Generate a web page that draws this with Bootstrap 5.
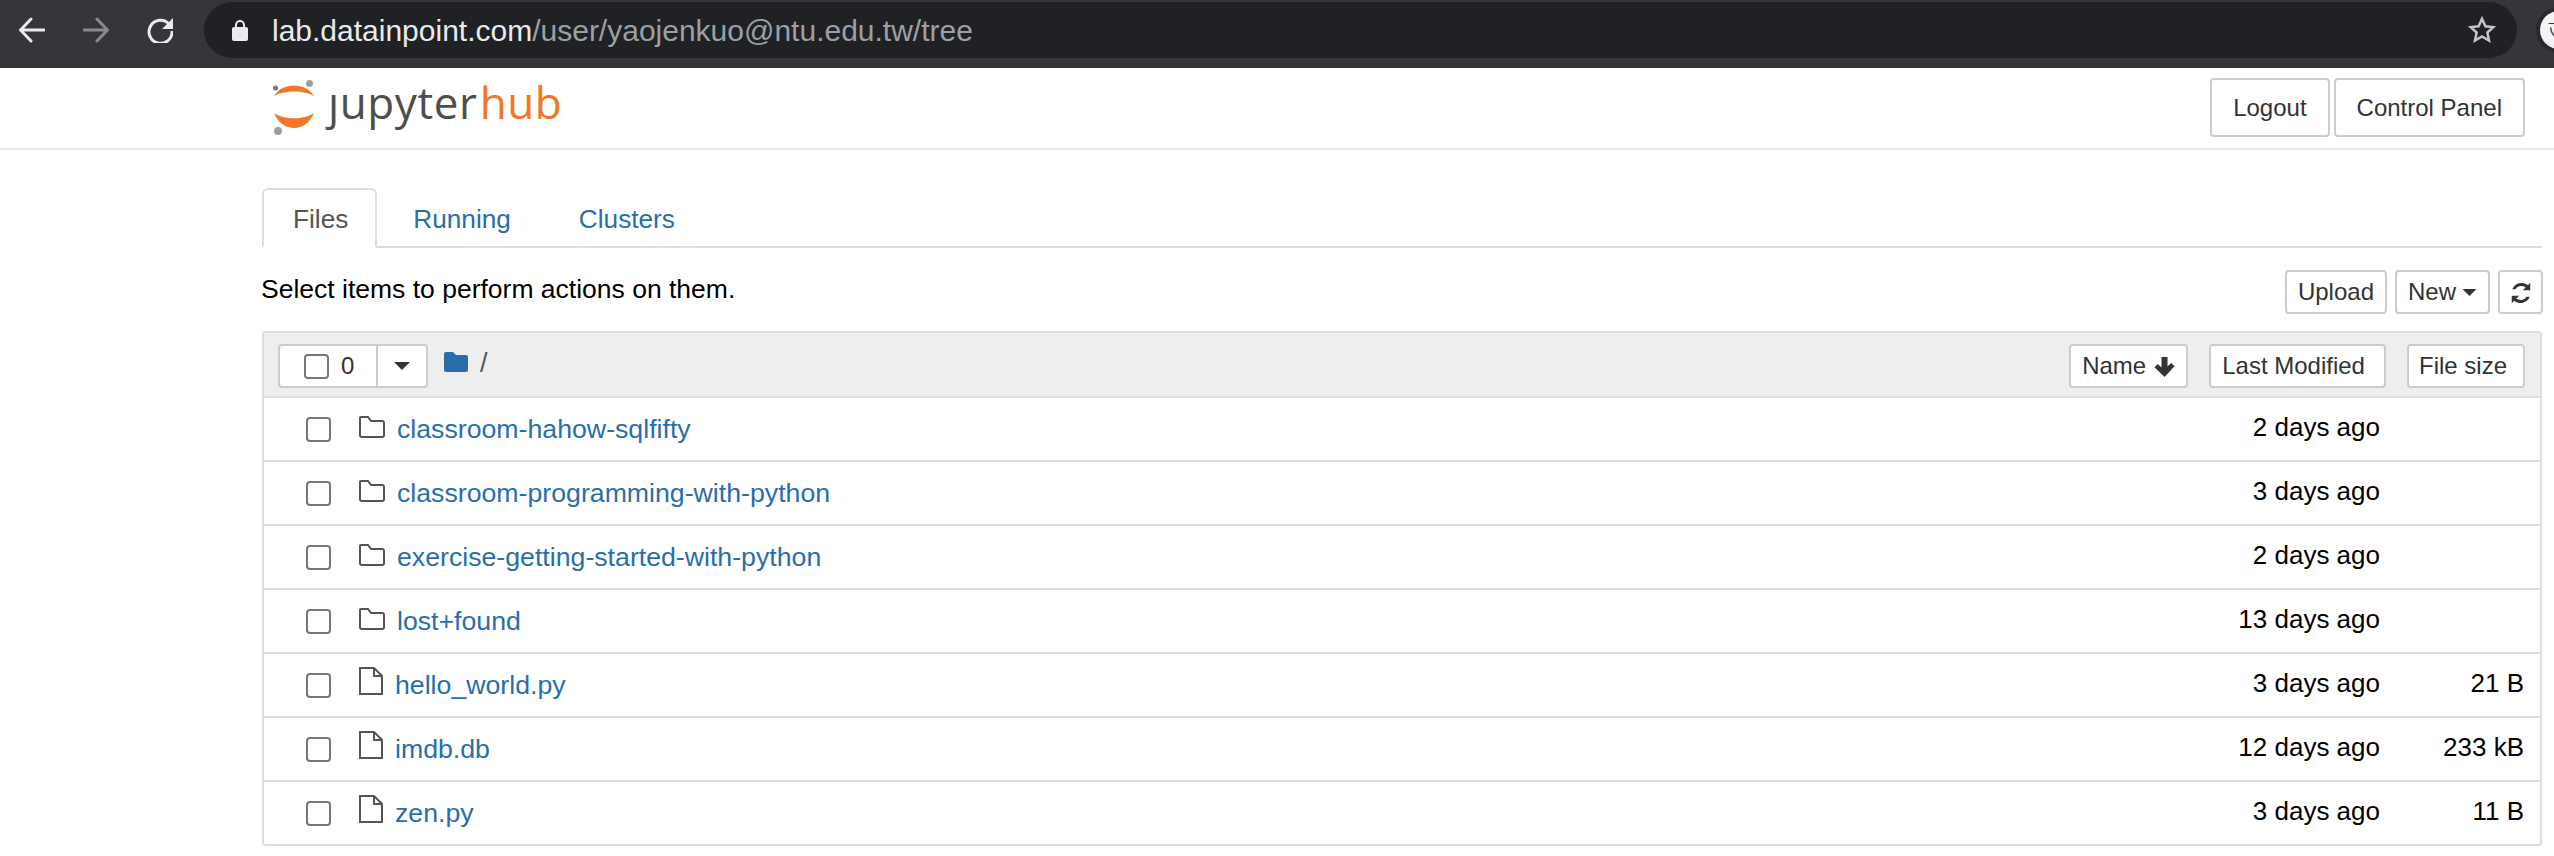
<!DOCTYPE html>
<html lang="en">
<head>
    <meta charset="UTF-8">
    <meta name="viewport" content="width=device-width, initial-scale=1.0">
    <title>JupyterHub</title>
    <link rel="stylesheet" href="https://cdn.jsdelivr.net/npm/bootstrap@5.3.2/dist/css/bootstrap.min.css">
    <style>
        html, body { height: 856px; overflow: hidden; }
        body { font-family: "Liberation Sans", Arial, sans-serif; font-size: 26px; color: #000; background: #fff; }
        a { color: #296eaa; text-decoration: none; }

        /* browser chrome */
        .chrome-bar { height: 68px; background: #35363a; padding: 2px 0 10px 19px; overflow: hidden; }
        .chrome-btn { width: 26px; height: 26px; flex: none; margin-right: 38px; }
        .chrome-btn:last-of-type { margin-right: 0; }
        .url-pill { width: 2313px; height: 56px; margin-left: 31px; background: #202124; border-radius: 28px; padding: 0 20px 0 28px; flex: none; font-size: 30px; }
        .url-host { color: #e8eaed; margin-left: 24px; }
        .url-path { color: #9aa0a6; }
        .chrome-avatar { width: 38px; height: 38px; margin-left: 23px; background: #f1f3f4; border-radius: 50%; flex: none; box-shadow: 0 0 0 4px #28292c; color: #35363a; font-size: 24px; line-height: 38px; padding-left: 9px; overflow: hidden; }

        /* hub header */
        .hub-head { height: 82px; border-bottom: 2px solid #e7e7e7; padding: 10px 29px 0 272px; }
        .logo-text { font-family: "Open Sans", sans-serif; font-size: 44px; line-height: 48px; color: #4e4e4e; letter-spacing: .6px; margin-left: 10px; }
        .logo-hub { color: #f37726; margin-left: 2px; }
        .btn-jp { font-size: 24px; line-height: 1; color: #333; background: #fff; border: 2px solid #ccc; border-radius: 4px; }
        .btn-head { height: 59px; padding: 0 21px; }
        .btn-tool { height: 44px; padding: 0 11px; }
        .btn-refresh { padding: 0 8.500px; }
        .btn-modified { padding-right: 19px; margin-left: 21px; }
        .btn-filesize { padding: 0 16px 0 10px; margin-left: 21px; }
        .new-caret { margin-left: 6px; }

        /* tree page */
        .tree-wrap { margin: 0 12px 0 262px; padding-top: 38px; }
        .tree-tabs { border-bottom: 2px solid #ddd; height: 60px; gap: 4px; }
        .tree-tabs .nav-link { font-size: 26.200px; line-height: 38px; height: 60px; padding: 10px 30px; color: #296eaa; border: 2px solid transparent; border-radius: 6px 6px 0 0; }
        .tree-tabs .nav-link.active { color: #555; background: #fff; border-color: #ddd #ddd #fff; padding: 10px 27px 10px 29px; }
        .tool-row { height: 83px; padding-top: 22px; margin: 0 -1px; font-size: 26.500px; }
        .tree-panel { border: 2px solid #ddd; border-radius: 4px; }
        .panel-head { height: 65px; background: #eee; border-bottom: 2px solid #ddd; padding: 11px 15px 0 14px; }
        .select-group { width: 150px; height: 44px; background: #fff; border: 2px solid #ccc; border-radius: 4px; }
        .select-left { width: 98px; border-right: 2px solid #ccc; padding-left: 24px; color: #333; font-size: 24px; gap: 12px; }
        .select-right { flex: 1; }
        .jp-check { width: 25px; height: 25px; flex: none; margin: 0; border: 2px solid #767676; border-radius: 4px; background: #fff; appearance: none; }
        .panel-slash { color: #555; font-size: 27px; line-height: 38px; margin-left: 12px; }
        .head-folder { margin: 8px 0 0 16px; }
        .tree-row { height: 64px; border-bottom: 2px solid #ddd; padding-left: 42px; }
        .tree-row:last-child { border-bottom: 0; height: 62px; }
        .tree-icon { display: flex; margin-left: 28px; margin-right: 12px; }
        .tree-icon-dir { margin-top: -4px; }
        .tree-icon-file { margin-top: -9px; }
        .tree-name { font-size: 26.700px; }
        .tree-date { margin-left: auto; margin-top: -3px; }
        .tree-size { width: 160px; padding-right: 16px; text-align: right; margin-top: -3px; }
    </style>
</head>
<body>
    <!-- browser toolbar -->
    <div class="chrome-bar d-flex align-items-center">
        <svg class="chrome-btn" viewBox="0 0 26 26" fill="none" stroke="#e8eaed" stroke-width="3" stroke-linecap="round"><path d="M25 13H2M12 2 1.500 13 12 24"/></svg>
        <svg class="chrome-btn" viewBox="0 0 26 26" fill="none" stroke="#8a8b8f" stroke-width="3" stroke-linecap="round"><path d="M1 13h23M14 2l10.500 11L14 24"/></svg>
        <svg class="chrome-btn" viewBox="0 0 26 26" fill="none" stroke="#e8eaed" stroke-width="3"><path d="M22 7A11.500 11.500 0 1 0 25 14"/><path d="M26 1v11H15z" fill="#e8eaed" stroke="none"/></svg>
        <div class="url-pill d-flex align-items-center">
            <svg width="16" height="22" viewBox="0 0 16 22" fill="#e8eaed"><path d="M3 9V6a5 5 0 0 1 10 0v3h-2V6a3 3 0 0 0-6 0v3z"/><rect y="8" width="16" height="14" rx="2"/></svg>
            <span class="url-host">lab.datainpoint.com</span><span class="url-path">/user/yaojenkuo@ntu.edu.tw/tree</span>
            <svg class="ms-auto" width="30" height="30" viewBox="0 0 24 24" fill="none" stroke="#c4c7c5" stroke-width="2"><path d="m12 3 2.700 6 6.300.700-4.700 4.300 1.300 6.500-5.600-3.300-5.600 3.300 1.300-6.500L3 9.700 9.300 9z"/></svg>
        </div>
        <div class="chrome-avatar">ত</div>
    </div>

    <!-- hub header -->
    <div class="hub-head d-flex justify-content-between">
        <div class="d-flex align-items-start">
            <svg width="46" height="60" viewBox="272 78 46 60">
                <path d="M274 96c8-14 32-14 40 0-10-6-30-6-40 0z" fill="#f37726"/>
                <path d="M274 113c10 7 30 7 40 0-8 20-32 20-40 0z" fill="#f37726"/>
                <circle cx="275.500" cy="88" r="2.500" fill="#767677"/>
                <circle cx="309.500" cy="83.500" r="3.500" fill="#9e9e9e"/>
                <circle cx="278" cy="131" r="4" fill="#9e9e9e"/>
            </svg>
            <span class="logo-text">ȷupyter<span class="logo-hub">hub</span></span>
        </div>
        <div class="d-flex align-items-start gap-1">
            <button class="btn btn-jp btn-head">Logout</button>
            <button class="btn btn-jp btn-head">Control Panel</button>
        </div>
    </div>

    <div class="tree-wrap">
        <ul class="nav tree-tabs">
            <li class="nav-item"><a class="nav-link active" href="#">Files</a></li>
            <li class="nav-item"><a class="nav-link" href="#">Running</a></li>
            <li class="nav-item"><a class="nav-link" href="#">Clusters</a></li>
        </ul>

        <div class="tool-row d-flex justify-content-between align-items-start">
            <span>Select items to perform actions on them.</span>
            <div class="d-flex gap-2">
                <button class="btn btn-jp btn-tool">Upload</button>
                <button class="btn btn-jp btn-tool d-flex align-items-center">New<svg class="new-caret" width="15" height="7" viewBox="0 0 16 8" fill="#333"><path d="M0 0h16L8 8z"/></svg></button>
                <button class="btn btn-jp btn-tool btn-refresh">
                    <svg width="24" height="24" viewBox="0 0 26 26" fill="#333"><path d="M23 2v8h-8l3-3a7.500 7.500 0 0 0-11 2H3.500A11 11 0 0 1 20.500 4.500z"/><path d="M3 24v-8h8l-3 3a7.500 7.500 0 0 0 11-2h3.500A11 11 0 0 1 5.500 21.500z"/></svg>
                </button>
            </div>
        </div>

        <div class="tree-panel">
            <div class="panel-head d-flex align-items-start">
                <div class="select-group d-flex">
                    <div class="select-left d-flex align-items-center"><input class="jp-check" type="checkbox"><span>0</span></div>
                    <div class="select-right d-flex align-items-center justify-content-center"><svg width="16" height="8" viewBox="0 0 16 8" fill="#333"><path d="M0 0h16L8 8z"/></svg></div>
                </div>
                <svg class="head-folder" width="24" height="20" viewBox="0 0 24 20" fill="#296eaa"><path d="M2 0h7l3 3h10a2 2 0 0 1 2 2v13a2 2 0 0 1-2 2H2a2 2 0 0 1-2-2V2a2 2 0 0 1 2-2z"/></svg>
                <span class="panel-slash">/</span>
                <button class="btn btn-jp btn-tool ms-auto d-flex align-items-center">Name<svg class="ms-2" width="21" height="21" viewBox="0 0 21 21" fill="#333"><path d="M7.500 1h6v9.500l3.600-3.600 3.400 3.400L10.500 21 .5 11.300l3.400-3.400 3.600 3.600z"/></svg></button>
                <button class="btn btn-jp btn-tool btn-modified">Last Modified</button>
                <button class="btn btn-jp btn-tool btn-filesize">File size</button>
            </div>
            <div id="rows"></div>
        </div>
    </div>

    <script>
        const items = [
            ["classroom-hahow-sqlfifty", "2 days ago", "", "dir"],
            ["classroom-programming-with-python", "3 days ago", "", "dir"],
            ["exercise-getting-started-with-python", "2 days ago", "", "dir"],
            ["lost+found", "13 days ago", "", "dir"],
            ["hello_world.py", "3 days ago", "21 B", "file"],
            ["imdb.db", "12 days ago", "233 kB", "file"],
            ["zen.py", "3 days ago", "11 B", "file"]
        ];
        const dirIcon = '<svg width="26" height="22" viewBox="0 0 26 22" fill="none" stroke="#555" stroke-width="2"><path d="M2 1h7l3 4h11a2 2 0 0 1 2 2v12a2 2 0 0 1-2 2H3a2 2 0 0 1-2-2V2a1 1 0 0 1 1-1z"/></svg>';
        const fileIcon = '<svg width="24" height="28" viewBox="0 0 24 28" fill="none" stroke="#555" stroke-width="2"><path d="M1 1h14l8 8v18H1zM15 1v8h8"/></svg>';
        document.getElementById("rows").innerHTML = items.map(function (it) {
            return '<div class="tree-row d-flex align-items-center">' +
                '<input class="jp-check" type="checkbox">' +
                '<span class="tree-icon tree-icon-' + it[3] + '">' + (it[3] === "dir" ? dirIcon : fileIcon) + '</span>' +
                '<a class="tree-name" href="#">' + it[0] + '</a>' +
                '<span class="tree-date">' + it[1] + '</span>' +
                '<span class="tree-size">' + it[2] + '</span></div>';
        }).join("");
    </script>
    <script src="https://cdn.jsdelivr.net/npm/bootstrap@5.3.2/dist/js/bootstrap.bundle.min.js"></script>
</body>
</html>
